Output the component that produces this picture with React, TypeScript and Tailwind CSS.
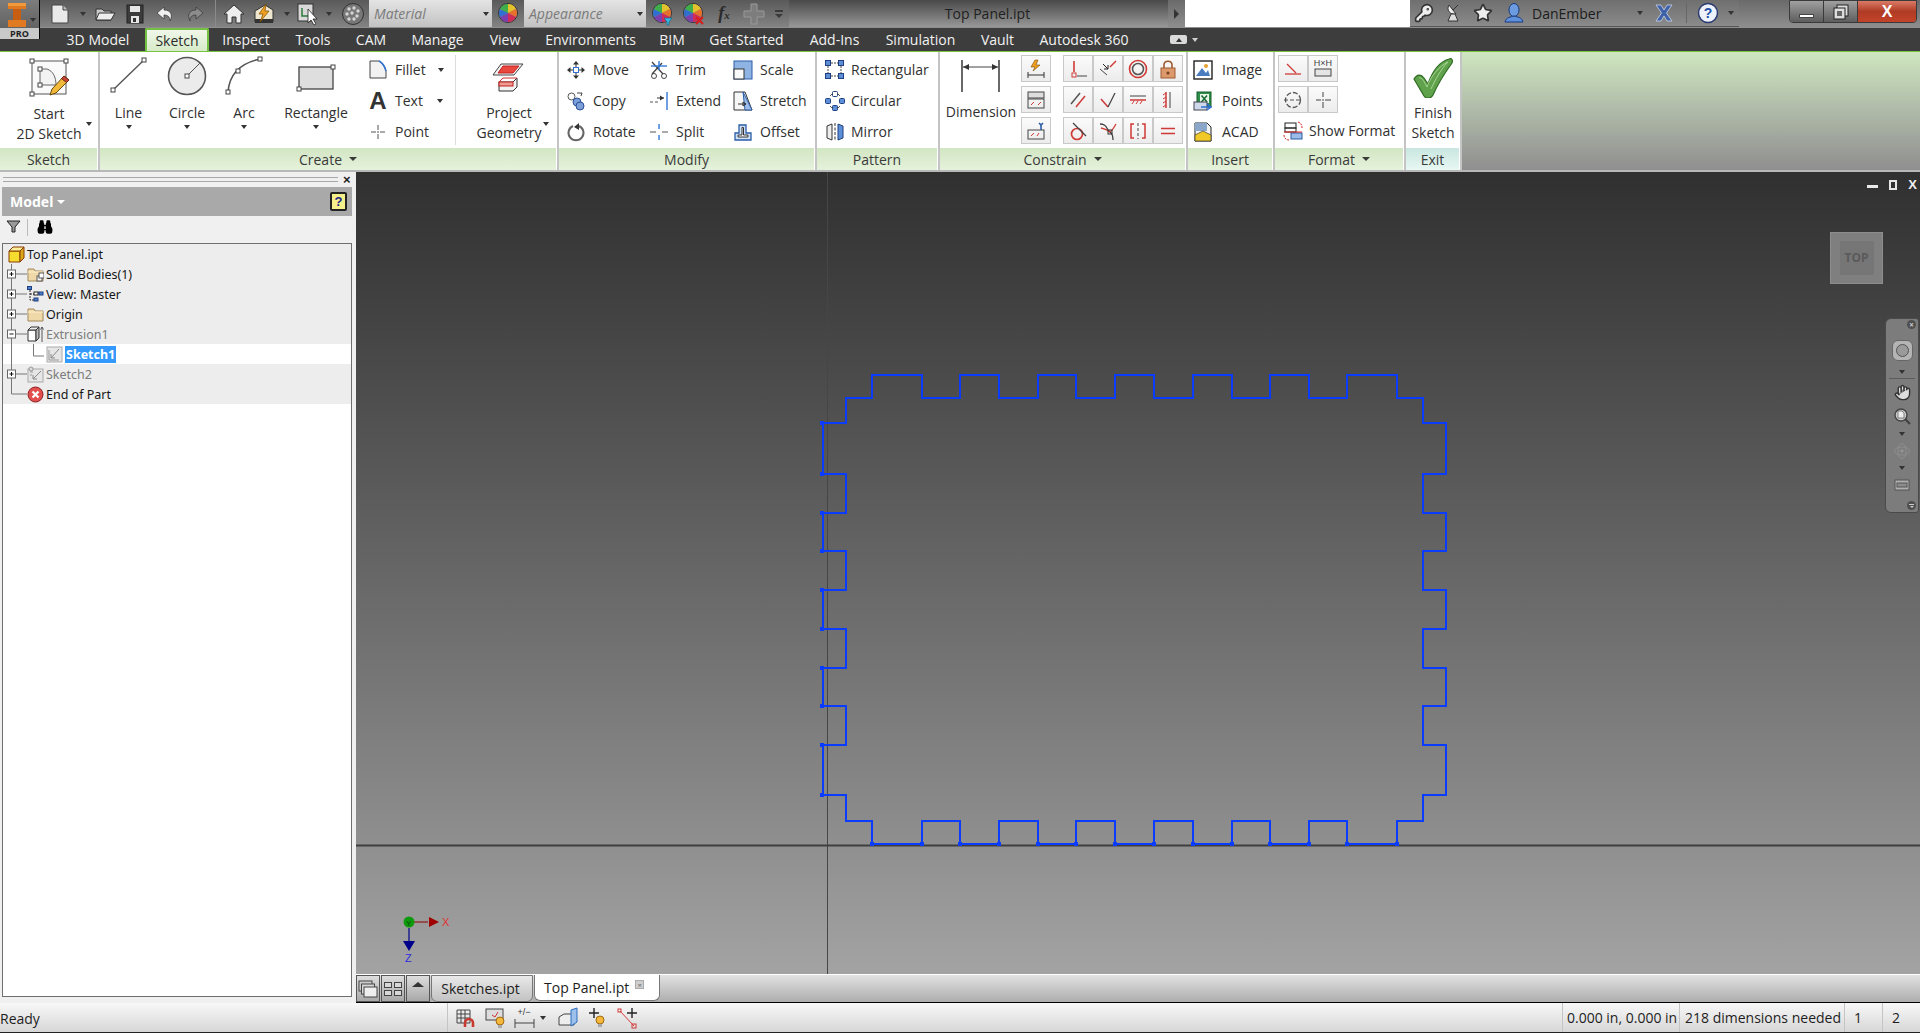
import React from "react";
import { Hand, Star, KeyRound, Binoculars } from "lucide-react";

type P = { w?: number; h?: number; children?: React.ReactNode; vb?: string };
const S = ({ w = 20, h = 20, vb, children }: P) => (
  <svg width={w} height={h} viewBox={vb ?? `0 0 ${w} ${h}`} fill="none" className="shrink-0 block">
    {children}
  </svg>
);
const Sq = ({ x, y, s = 4, c = "#444" }: { x: number; y: number; s?: number; c?: string }) => (
  <rect x={x - s / 2} y={y - s / 2} width={s} height={s} fill="#fff" stroke={c} />
);
const Dd = ({ c = "dark" }: { c?: "dark" | "light" | "mid" }) => (
  <span
    className={
      c === "dark"
        ? "block w-0 h-0 border-x-[3px] border-x-transparent border-t-[4px] border-t-[#333]"
        : c === "mid"
          ? "block w-0 h-0 border-x-[4px] border-x-transparent border-t-[4px] border-t-[#3a3a3a]"
          : "block w-0 h-0 border-x-[3px] border-x-transparent border-t-[4px] border-t-[#cfcfcf]"
    }
  />
);
const T = ({ w, children, cls = "" }: { w: number; children?: React.ReactNode; cls?: string }) => (
  <div style={{ width: w }} className={"flex items-center justify-center shrink-0 h-full " + cls}>
    {children}
  </div>
);

const Ball = ({ extra }: { extra?: React.ReactNode }) => (
  <S w={22} h={24}>
    <circle cx="11" cy="11" r="9.5" fill="#888" stroke="#333" />
    <path d="M11 11 L11 2 A9 9 0 0 1 19 7Z" fill="#e3c22c" />
    <path d="M11 11 L19 7 A9 9 0 0 1 19 15Z" fill="#e7702a" />
    <path d="M11 11 L19 15 A9 9 0 0 1 11 20Z" fill="#cf2c5a" />
    <path d="M11 11 L11 20 A9 9 0 0 1 3 15Z" fill="#7b3fb0" />
    <path d="M11 11 L3 15 A9 9 0 0 1 3 7Z" fill="#2f6fd0" />
    <path d="M11 11 L3 7 A9 9 0 0 1 11 2Z" fill="#3fae4a" />
    {extra}
  </S>
);

/* ---------- quick access icons ---------- */
const QNew = () => (
  <S w={20} h={22}>
    <path d="M2 2H13L18 7V20H2Z" fill="#e9e9e9" stroke="#444" />
    <path d="M13 2V7H18" fill="#bbb" stroke="#444" />
  </S>
);
const QOpen = () => (
  <S w={22} h={20}>
    <path d="M2 5H8L10 7H17V16H2Z" fill="#c9c9c9" stroke="#333" />
    <path d="M5 9H21L17 16H2Z" fill="#ededed" stroke="#333" />
  </S>
);
const QSave = () => (
  <S w={20} h={22}>
    <rect x="2" y="2" width="16" height="18" fill="#3c3c3c" stroke="#222" />
    <rect x="5" y="3" width="10" height="6" fill="#e6e6e6" />
    <rect x="6" y="13" width="8" height="7" fill="#e6e6e6" />
    <rect x="8" y="15" width="3" height="4" fill="#333" />
  </S>
);
const QArrow = ({ c, flip }: { c: string; flip?: boolean }) => (
  <S w={20} h={20}>
    <g transform={flip ? "translate(20 0) scale(-1 1)" : undefined}>
      <path d="M9 3 L2 9 L9 15 V11 C13 11 15 13 15 17 C18 11 16 6 9 6Z" fill={c} stroke="#333" strokeWidth=".7" />
    </g>
  </S>
);
const QHome = () => (
  <S w={22} h={22}>
    <path d="M11 2 L21 11 H18 V20 H13 V14 H9 V20 H4 V11 H1Z" fill="#eee" stroke="#333" />
  </S>
);
const QBolt = () => (
  <S w={24} h={24}>
    <path d="M3 9 L13 3 L21 8 V20 H3Z" fill="#efe6cf" stroke="#333" />
    <rect x="3" y="17" width="18" height="4" fill="#333" />
    <path d="M14 2 L7 12 H11 L8 20 L17 9 H13Z" fill="#f0a020" stroke="#7a4a00" strokeWidth=".7" />
  </S>
);
const QSelect = () => (
  <S w={24} h={24}>
    <rect x="2" y="2" width="15" height="17" fill="#d8d8d8" stroke="#333" />
    <path d="M6 6V14H12" stroke="#2b7a3a" strokeWidth="1.5" />
    <path d="M12 7 L12 21 L15 18 L18 23 L20 22 L17 17 L21 17Z" fill="#fff" stroke="#222" strokeWidth=".8" />
  </S>
);
const QSphere = () => (
  <S w={24} h={24}>
    <circle cx="12" cy="12" r="10.5" fill="#777" stroke="#333" />
    {[[8, 7], [13, 6], [17, 9], [6, 12], [11, 11], [16, 14], [8, 17], [13, 17]].map(([x, y]) => (
      <circle key={`${x}${y}`} cx={x} cy={y} r="1.7" fill="#d4d4d4" />
    ))}
  </S>
);
const QPlus = () => (
  <S w={22} h={22}>
    <path d="M8 1H14V8H21V14H14V21H8V14H1V8H8Z" fill="#7d7d7d" stroke="#9a9a9a" />
  </S>
);

/* ---------- big ribbon icons ---------- */
const BigStart = () => (
  <S w={44} h={44}>
    <rect x="5" y="7" width="34" height="33" fill="#fafafa" stroke="#555" />
    <path d="M13 15 H20 C26 17 29 23 29 31 H13Z" stroke="#666" fill="#f3f3f3" />
    <Sq x={5} y={7} /><Sq x={39} y={7} /><Sq x={5} y={40} /><Sq x={13} y={15} /><Sq x={13} y={31} />
    <path d="M37 22 L42 26 L29 39 L23 41 L25 35Z" fill="#f0b93a" stroke="#6b4a10" />
    <path d="M37 22 L42 26 L39.5 28.5 L34.5 24.5Z" fill="#c8443a" stroke="#6b2a10" />
  </S>
);
const BigLine = () => (
  <S w={44} h={44}>
    <path d="M7 35 L36 7" stroke="#555" strokeWidth="1.4" />
    <Sq x={6} y={36} /><Sq x={37} y={6} />
  </S>
);
const BigCircle = () => (
  <S w={44} h={44}>
    <circle cx="22" cy="22" r="18.5" fill="#ebebeb" stroke="#555" strokeWidth="1.6" />
    <path d="M22 22 L35 9" stroke="#555" />
    <Sq x={22} y={22} />
  </S>
);
const BigArc = () => (
  <S w={44} h={44}>
    <path d="M6 38 C7 24 14 10 38 5" stroke="#555" strokeWidth="1.6" />
    <Sq x={6} y={38} /><Sq x={16} y={17} /><Sq x={38} y={5} />
  </S>
);
const BigRect = () => (
  <S w={44} h={44}>
    <rect x="5" y="13" width="34" height="22" fill="#dedede" stroke="#444" strokeWidth="1.3" />
    <Sq x={39} y={13} /><Sq x={5} y={35} />
  </S>
);
const BigProject = () => (
  <S w={44} h={44}>
    <path d="M6 21 L14 10 H36 L27 21Z" fill="#f4f4f4" stroke="#444" />
    <path d="M11 19 L16 12 H32 L26 19Z" fill="#e9483f" stroke="#c02020" />
    <path d="M12 28 H26 L30 24 V33 L26 37 H12Z" fill="#f2f2f2" stroke="#333" />
    <path d="M12 28 L16 24 H30" stroke="#d23030" />
    <rect x="12" y="28" width="14" height="4" fill="#ef9a92" stroke="#c02020" />
  </S>
);
const BigDim = () => (
  <S w={44} h={44}>
    <path d="M3 6V38M40 6V38" stroke="#444" strokeWidth="1.6" />
    <path d="M4 13H39" stroke="#444" />
    <path d="M4 13 L10 10 V16Z M39 13 L33 10 V16Z" fill="#333" />
  </S>
);
const BigCheck = () => (
  <S w={44} h={44}>
    <path d="M3 25 C6 20 10 20 13 24 L17 30 C21 18 28 8 38 5 C41 4 42 6 41 9 C33 20 26 32 22 41 C20 45 15 45 13 42Z" fill="#5fa24b" stroke="#2f6b22" strokeWidth="1.2" />
    <path d="M8 24 C10 23 12 25 16 33 C20 22 28 12 37 8 C30 15 24 26 20 35" stroke="#a9d595" strokeWidth="1" />
  </S>
);

/* ---------- small ribbon icons ---------- */
const Fillet = () => (
  <S>
    <path d="M2 1H11C15 3 17 7 18 11V18H2Z" fill="#f2f2f2" stroke="#444" />
    <path d="M11 1C15 3 17 7 18 11" stroke="#2f6fd0" strokeWidth="1.6" />
  </S>
);
const PointI = () => (
  <S>
    <path d="M10 3V8M10 12V17M3 10H8M12 10H17" stroke="#555" />
    <circle cx="10" cy="10" r=".8" fill="#333" />
  </S>
);
const MoveI = () => (
  <S>
    <path d="M10 1 L7 4.5H13Z M10 19 L7 15.5H13Z M1 10 L4.5 7V13Z M19 10 L15.5 7V13Z" fill="#333" />
    <path d="M10 4V7M10 13V16M4 10H7M13 10H16" stroke="#333" />
    <rect x="7.5" y="7.5" width="5" height="5" stroke="#2f6fd0" />
  </S>
);
const CopyI = () => (
  <S>
    <circle cx="5.5" cy="5.5" r="3.5" stroke="#555" />
    <circle cx="11" cy="11" r="4" fill="#7d9fd8" stroke="#2a4e96" />
    <circle cx="14" cy="15" r="4" fill="#7d9fd8" stroke="#2a4e96" />
    <path d="M11 2H16L15 5" stroke="#444" />
  </S>
);
const RotateI = () => (
  <S>
    <path d="M7 4 A7.5 7.5 0 1 0 13 4" stroke="#666" strokeWidth="2" />
    <path d="M13 1 L8 5 L13 8Z" fill="#333" />
  </S>
);
const TrimI = () => (
  <S>
    <path d="M3 2 L14 14M3 14 L13 3" stroke="#444" strokeWidth="1.3" />
    <circle cx="15" cy="16" r="2.5" stroke="#444" />
    <circle cx="5" cy="16" r="2.5" stroke="#444" />
    <path d="M2 6H18" stroke="#2f78d8" strokeWidth="1.4" />
    <path d="M10 1V10" stroke="#2f78d8" strokeWidth="1.4" />
  </S>
);
const ExtendI = () => (
  <S>
    <path d="M1 11H4M6 11H9" stroke="#555" />
    <path d="M8 7H15" stroke="#333" />
    <path d="M15 7 L11 4.5V9.5Z" fill="#333" />
    <path d="M18 1V19" stroke="#2f78d8" strokeWidth="1.4" />
  </S>
);
const SplitI = () => (
  <S>
    <path d="M1 10H7M13 10H19" stroke="#555" strokeWidth="1.2" />
    <path d="M10 2V7M10 13V18" stroke="#2f78d8" strokeWidth="1.4" />
  </S>
);
const ScaleI = () => (
  <S>
    <rect x="1" y="1" width="18" height="18" fill="#8fb4e4" stroke="#2a5ca8" />
    <rect x="1" y="9" width="10" height="10" fill="#fafafa" stroke="#333" />
  </S>
);
const StretchI = () => (
  <S>
    <path d="M1 1H12L19 19H1Z" fill="#f6f6f6" stroke="#333" />
    <path d="M10 1L19 19H12Z" fill="#9dbde8" stroke="#2a5ca8" />
    <path d="M5 13H13M13 13L10 11V15Z" stroke="#333" />
  </S>
);
const OffsetI = () => (
  <S>
    <path d="M2 18V11H6V3H13V11H18V18Z" fill="#cfe0f6" stroke="#2a5ca8" strokeWidth="1.3" />
    <path d="M5 15V13H9V5.5H10.5V13H15V15Z" fill="#fff" stroke="#333" />
  </S>
);
const RectP = () => (
  <S>
    {[[3, 3], [16, 3], [3, 16], [16, 16]].map(([x, y]) => (
      <rect key={`${x}${y}`} x={x - 2.5} y={y - 2.5} width="5" height="5" fill="#5c8fd6" stroke="#1f3f80" />
    ))}
    <path d="M6 3H13M6 16H13M3 6V13M16 6V13" stroke="#444" strokeDasharray="2 1" />
  </S>
);
const CircP = () => (
  <S>
    {[[10, 3], [3, 10], [17, 10], [10, 17]].map(([x, y]) => (
      <rect key={`${x}${y}`} x={x - 2.5} y={y - 2.5} width="5" height="5" rx="1" fill={y === 3 ? "#fff" : "#5c8fd6"} stroke="#1f3f80" />
    ))}
    <path d="M5 5L8 2M15 5L12 2M5 15L8 18M15 15L12 18" stroke="#555" />
  </S>
);
const MirrorI = () => (
  <S>
    <path d="M2 4 L7 2 V18 L2 16Z" fill="#eee" stroke="#333" />
    <path d="M18 4 L13 2 V18 L18 16Z" fill="#5c8fd6" stroke="#1f3f80" />
    <path d="M10 1V19" stroke="#333" strokeDasharray="3 1.5" />
  </S>
);
const ImageI = () => (
  <S>
    <rect x="1" y="1" width="18" height="18" fill="#fff" stroke="#222" strokeWidth="1.4" />
    <path d="M3 16 L9 8 L13 13 L15 10 L17 16Z" fill="#4a7cc0" />
    <circle cx="13" cy="6" r="2" fill="#e8a030" />
  </S>
);
const PointsI = () => (
  <S>
    <rect x="4" y="1" width="14" height="15" fill="#2f8f4a" stroke="#165c2a" />
    <rect x="7" y="3" width="9" height="9" fill="#e8f5e8" />
    <path d="M8.5 4.5L14 11M14 4.5L8.5 11" stroke="#176a30" strokeWidth="1.5" />
    <rect x="1" y="11" width="13" height="8" fill="#cfd9ea" stroke="#445" />
    <path d="M8 16H18M14 13L18 16L14 19" stroke="#2f6fd0" strokeWidth="1.5" />
  </S>
);
const AcadI = () => (
  <S>
    <path d="M2 1H14L18 5V19H2Z" fill="#f2f2f2" stroke="#222" />
    <rect x="2" y="1" width="12" height="8" fill="#8aa7c9" />
    <path d="M2 19V13L10 9L18 13V19Z" fill="#f0c828" stroke="#222" strokeWidth=".6" />
  </S>
);
const ShowFmt = () => (
  <S>
    <rect x="2" y="2" width="11" height="5" stroke="#222" />
    <rect x="2" y="7" width="11" height="4" stroke="#222" />
    <rect x="8" y="12" width="11" height="6" fill="#9dbde8" stroke="#2a5ca8" />
    <path d="M1 11H19" stroke="#d82020" />
    <path d="M15 1 C18 2 19 4 19 7M1 14C1 17 3 19 6 19" stroke="#d82020" strokeDasharray="2 1" />
  </S>
);

const R = "#cf3a36";
const Con: React.ReactNode[] = [
  <S key="a"><path d="M6 2V13" stroke={R} strokeWidth="1.6" /><rect x="4" y="14" width="4" height="4" stroke={R} /><path d="M9 17H19" stroke="#444" /></S>,
  <S key="b"><path d="M12 8 L18 2" stroke={R} strokeWidth="1.4" /><path d="M2 10L9 16" stroke="#444" /><path d="M5 5L10 10M10 10V6M10 10H6" stroke="#222" /></S>,
  <S key="c"><circle cx="10" cy="10" r="8.5" stroke={R} strokeWidth="1.6" /><circle cx="10" cy="10" r="5.5" stroke="#555" strokeWidth="1.6" /></S>,
  <S key="d"><path d="M6 9V6C6 1 14 1 14 6V9" stroke="#a05a30" strokeWidth="1.6" /><rect x="3" y="9" width="14" height="10" fill="#dc9a6c" stroke="#a05a30" /><circle cx="10" cy="14" r="1.6" fill="#7a4020" /></S>,
  <S key="e"><path d="M3 14L12 3" stroke="#555" strokeWidth="1.5" /><path d="M8 17L17 6" stroke={R} strokeWidth="1.5" /></S>,
  <S key="f"><path d="M3 9L10 17" stroke={R} strokeWidth="1.5" /><path d="M10 17L17 3" stroke="#444" strokeWidth="1.3" /></S>,
  <S key="g"><path d="M2 6H18" stroke="#444" /><path d="M2 10H18" stroke={R} strokeWidth="1.5" /><path d="M4 14L6 11M8 14L10 11M12 14L14 11" stroke={R} /></S>,
  <S key="h"><path d="M12 2V18" stroke="#444" /><path d="M8 2V18" stroke={R} strokeWidth="1.5" /><path d="M5 5L8 3M5 9L8 7M5 13L8 11M5 17L8 15" stroke={R} /></S>,
  <S key="i"><circle cx="9" cy="13" r="5.5" stroke={R} strokeWidth="1.7" /><path d="M5 2L18 15" stroke="#444" strokeWidth="1.3" /></S>,
  <S key="j"><path d="M2 3C10 3 8 9 12 11C15 13 15 16 15 19" stroke="#444" strokeWidth="1.3" /><path d="M3 7C7 8 10 9 12 11C15 9 16 6 18 3" stroke={R} strokeWidth="1.3" /><rect x="10" y="9" width="4" height="4" stroke="#333" /></S>,
  <S key="k"><path d="M6 3H3V17H6M14 3H17V17H14" stroke={R} strokeWidth="1.5" /><path d="M10 2V18" stroke="#444" strokeDasharray="3 2" /></S>,
  <S key="l"><path d="M3 7.5H17M3 12.5H17" stroke={R} strokeWidth="1.6" /></S>,
];
const Fmt: React.ReactNode[] = [
  <S key="a"><path d="M2 15H18" stroke={R} strokeWidth="1.3" /><path d="M4 5L13 14" stroke={R} strokeWidth="1.3" /></S>,
  <S key="b" w={22} h={24}>
    <text x="11" y="9" textAnchor="middle" fontSize="9" fontFamily="Liberation Sans, sans-serif" fill="#444">H×H</text>
    <rect x="3" y="12" width="16" height="7" fill="#e4e4e4" stroke="#444" />
  </S>,
  <S key="c"><circle cx="10" cy="10" r="7.5" stroke="#555" strokeWidth="1.3" strokeDasharray="5 2" /><path d="M1 10H19" stroke="#555" strokeDasharray="4 2" /></S>,
  <S key="d"><path d="M10 2V7M10 12V18M3 10H8M12 10H18" stroke="#444" /><circle cx="10" cy="10" r=".8" fill="#333" /></S>,
];

/* ---------- tree icons ---------- */
const TCube = () => (
  <S w={17} h={17}>
    <path d="M1 5H12V16H1Z" fill="#f7dc30" stroke="#8a3a00" />
    <path d="M1 5L5 1H16L12 5Z" fill="#fbef9a" stroke="#8a3a00" />
    <path d="M12 5L16 1V12L12 16Z" fill="#d8a818" stroke="#8a3a00" />
  </S>
);
const TFolder = ({ doc }: { doc?: boolean }) => (
  <S w={17} h={17}>
    <path d="M1 3H7L8 5H16V15H1Z" fill="#f0d9a8" stroke="#a08858" />
    <path d="M1 6H16" stroke="#fff2d0" />
    {doc && (
      <>
        <rect x="10" y="10" width="5" height="5" fill="#fff" stroke="#555" />
        <rect x="12" y="7" width="5" height="5" fill="#fff" stroke="#555" />
      </>
    )}
  </S>
);
const TView = () => (
  <S w={17} h={17}>
    <rect x="0.5" y="0.5" width="4" height="3" fill="#4c80c8" stroke="#1f3f80" />
    <path d="M3 4V14H7M3 8H7" stroke="#222" strokeDasharray="2 1" />
    <path d="M7 7H15" stroke="#222" />
    <rect x="7" y="6" width="4" height="3" fill="#fff" stroke="#222" />
    <rect x="12" y="6" width="4" height="3" fill="#4c80c8" stroke="#1f3f80" />
    <rect x="7" y="12" width="4" height="3" fill="#4c80c8" stroke="#1f3f80" />
  </S>
);
const TExtr = () => (
  <S w={17} h={17}>
    <path d="M1 4H9V15H1Z" fill="#fff" stroke="#333" />
    <path d="M1 4L4 1H12L9 4Z" fill="#eee" stroke="#333" />
    <path d="M9 4L12 1V12L9 15Z" fill="#bbb" stroke="#333" />
    <path d="M15 16V1M13.5 3.5L15 1L16.5 3.5" stroke="#555" />
  </S>
);
const TSketch = () => (
  <S w={17} h={17}>
    <rect x="1" y="1" width="15" height="15" fill="#e6e6e6" stroke="#aaa" />
    <path d="M3 4V14H13" stroke="#999" />
    <path d="M13 3L5 12M5 8V12H9" stroke="#888" />
  </S>
);
const TSketch2 = () => (
  <S w={17} h={17}>
    <rect x="1" y="3" width="15" height="13" fill="#e6e6e6" stroke="#aaa" />
    <circle cx="4" cy="3" r="2" fill="#ddd" stroke="#999" />
    <path d="M3 6H6M3 9H5" stroke="#999" />
    <path d="M14 5L6 13M6 9V13H10" stroke="#888" />
  </S>
);
const TEnd = () => (
  <S w={17} h={17}>
    <circle cx="8.5" cy="8.5" r="7.5" fill="#e34f4f" stroke="#8f1f1f" />
    <path d="M5.5 5.5L11.5 11.5M11.5 5.5L5.5 11.5" stroke="#fff" strokeWidth="2.2" />
  </S>
);

const Big = ({ w, icon, lines, dd, pl = 0, top = 51 }: { w: number; icon: React.ReactNode; lines: string[]; dd?: "inline" | "side"; pl?: number; top?: number }) => (
  <div style={{ width: w, paddingLeft: pl }} className="relative shrink-0 flex flex-col items-center h-full">
    <div style={{ height: top }} className="pt-[2px] flex justify-center">{icon}</div>
    {lines.map((l) => (
      <div key={l} className="h-5 leading-5 whitespace-nowrap">{l}</div>
    ))}
    {dd === "inline" && <div className="mt-[2px]"><Dd /></div>}
    {dd === "side" && <div className="absolute right-[6px] top-[70px]"><Dd /></div>}
  </div>
);
const Small = ({ icon, label, gap = 7, dd, ddGap = 0 }: { icon: React.ReactNode; label: string; gap?: number; dd?: boolean; ddGap?: number }) => (
  <div className="h-[31px] flex items-center">
    <div className="w-5 flex justify-center">{icon}</div>
    <span style={{ marginLeft: gap }} className="whitespace-nowrap">{label}</span>
    {dd && <span style={{ marginLeft: ddGap }}><Dd /></span>}
  </div>
);
const Panel = ({ w, label, dd, children, exit }: { w: number; label: string; dd?: boolean; children: React.ReactNode; exit?: boolean }) => (
  <div style={{ width: w }} className="shrink-0 flex flex-col h-full bg-white border-r-2 border-[#c4c4c4]">
    <div className="h-[96px] flex">{children}</div>
    <div
      className={
        "h-[22px] mr-[1px] flex items-center justify-center gap-[7px] text-[#3a3a3a] " +
        (exit ? "bg-gradient-to-b from-[#c9e6e0] to-[#e8f7f3]" : "bg-gradient-to-b from-[#d2e6c3] to-[#e6f2dc]")
      }
    >
      {label}
      {dd && <Dd c="mid" />}
    </div>
  </div>
);
const Cell = ({ children, w = 30 }: { children: React.ReactNode; w?: number }) => (
  <div style={{ width: w }} className="h-[27px] flex items-center justify-center bg-gradient-to-b from-[#fbfbfb] to-[#ececec] border border-[#c9c9c9]">
    {children}
  </div>
);

const pts: [number, number][] = [
  [823,423],[846,423],[846,398],[872,398],[872,375],[922,375],[922,398],[960,398],[960,375],[999,375],[999,398],[1038,398],[1038,375],[1076,375],[1076,398],[1115,398],[1115,375],[1154,375],[1154,398],[1193,398],[1193,375],[1232,375],[1232,398],[1270,398],[1270,375],[1309,375],[1309,398],[1347,398],[1347,375],[1397,375],[1397,398],[1423,398],[1423,423],[1446,423],[1446,474],[1423,474],[1423,513],[1446,513],[1446,551],[1423,551],[1423,590],[1446,590],[1446,629],[1423,629],[1423,668],[1446,668],[1446,706],[1423,706],[1423,745],[1446,745],[1446,795],[1423,795],[1423,821],[1397,821],[1397,844],[1347,844],[1347,821],[1309,821],[1309,844],[1270,844],[1270,821],[1232,821],[1232,844],[1193,844],[1193,821],[1154,821],[1154,844],[1115,844],[1115,821],[1076,821],[1076,844],[1038,844],[1038,821],[999,821],[999,844],[960,844],[960,821],[922,821],[922,844],[872,844],[872,821],[846,821],[846,795],[823,795],[823,745],[846,745],[846,706],[823,706],[823,668],[846,668],[846,629],[823,629],[823,590],[846,590],[846,551],[823,551],[823,513],[846,513],[846,474],[823,474],
];
const d = "M" + pts.map((p) => p.join(" ")).join("L") + "Z";
const handles: [number, number][] = [
  ...[423,474,513,551,590,629,668,706,745,795].map((y) => [822, y] as [number, number]),
  ...[872,922,960,999,1038,1076,1115,1154,1193,1232,1270,1309,1347,1397].map((x) => [x, 844] as [number, number]),
];

const tabs: [string, number][] = [
  ["Inspect",74],["Tools",60],["CAM",56],["Manage",77],["View",58],["Environments",113],["BIM",50],["Get Started",99],["Add-Ins",77],["Simulation",95],["Vault",59],["Autodesk 360",114],
];

const TreeRow = ({ left, icon, label, dim }: { left: "plus" | "minus" | "end"; icon: React.ReactNode; label: string; dim?: boolean }) => (
  <div className="h-5 flex items-center">
    <svg width="24" height="20" viewBox="0 0 24 20" className="shrink-0">
      <path d={left === "end" ? "M8.5 0V10H24" : "M8.5 0V20"} stroke="#777" fill="none" />
      {left !== "end" && (
        <>
          <path d="M13 10H24" stroke="#777" />
          <rect x="4.5" y="6" width="8" height="8" fill="#fff" stroke="#666" />
          <path d="M6.5 10H10.5" stroke="#111" />
          {left === "plus" && <path d="M8.5 8V12" stroke="#111" />}
        </>
      )}
    </svg>
    <div className="w-[17px] shrink-0">{icon}</div>
    <span className={"ml-[2px] pt-[2px] " + (dim ? "text-[#7c7c7c]" : "text-[#171717]")}>{label}</span>
  </div>
);

export default function App() {
  return (
    <div className="w-[1920px] h-[1033px] flex flex-col overflow-hidden bg-[#3d3d3d] text-[14px] font-['Open_Sans','Noto_Sans',sans-serif]">
      {/* title bar */}
      <div className="relative h-[28px] flex shrink-0 bg-gradient-to-b from-[#6a6a6a] to-[#8f8f8f]">
        <div className="absolute left-0 top-0 z-10 w-10 h-[39px] bg-gradient-to-b from-[#7c7c7c] to-[#5a5a5a] border-r border-b border-black flex flex-col items-center">
          <div className="relative h-[28px] w-full">
            <svg width="40" height="28" viewBox="0 0 40 28" className="block">
              <path d="M8 3H26V9H21V20H26V27H8V20H13V9H8Z" fill="#e07a22" />
              <path d="M13 9H21V20H13Z" fill="#c85e12" />
              <path d="M8 3H26V6H8Z" fill="#f09a3c" />
            </svg>
            <div className="absolute right-[3px] top-[18px]"><Dd c="dark" /></div>
          </div>
          <div className="w-full h-[11px] bg-[#c9c9c9] text-[9px] leading-[11px] text-center font-bold text-[#222]">PRO</div>
        </div>
        <div className="flex w-[789px] h-[27px] shrink-0 bg-gradient-to-b from-[#5a5a5a] to-[#838383]">
          <T w={44} />
          <T w={32}><QNew /></T>
          <T w={14}><Dd c="dark" /></T>
          <T w={30}><QOpen /></T>
          <T w={30}><QSave /></T>
          <T w={30}><QArrow c="#efefef" /></T>
          <T w={30}><QArrow c="#8c8c8c" flip /></T>
          <T w={10}><span className="block w-px h-full bg-[#8a8a8a]" /></T>
          <T w={28}><QHome /></T>
          <T w={32}><QBolt /></T>
          <T w={14}><Dd /></T>
          <T w={28}><QSelect /></T>
          <T w={14}><Dd /></T>
          <T w={33}><QSphere /></T>
          <div className="w-[123px] shrink-0 h-full bg-gradient-to-b from-[#e4e4e4] to-[#c2c2c2] flex items-center justify-between pl-[5px] pr-[3px] italic text-[#7b7b7b]">
            Material<Dd c="dark" />
          </div>
          <T w={32}><Ball /></T>
          <div className="w-[122px] shrink-0 h-full bg-gradient-to-b from-[#e4e4e4] to-[#c2c2c2] flex items-center justify-between pl-[5px] pr-[3px] italic text-[#7b7b7b]">
            Appearance<Dd c="dark" />
          </div>
          <T w={32}><Ball extra={<path d="M13 16H21L18 20V23H16V20Z" fill="#35b7e8" stroke="#106080" strokeWidth=".6" />} /></T>
          <T w={30}><Ball extra={<path d="M14 15L21 22M21 15L14 22" stroke="#d91c1c" strokeWidth="2" />} /></T>
          <T w={32}><span className="font-['Liberation_Serif',serif] italic font-bold text-[18px] text-[#2b2b2b]">f<span className="text-[11px]">x</span></span></T>
          <T w={28}><QPlus /></T>
          <T w={21}><span className="flex flex-col gap-[2px] items-center"><span className="block w-2 h-[2px] bg-[#3a3a3a]" /><Dd c="mid" /></span></T>
        </div>
        <div className="w-[379px] shrink-0 h-[27px] pl-[18px] flex items-center justify-center text-[#1f1f1f] bg-gradient-to-b from-[#4a4a4a] to-[#989898]">Top Panel.ipt</div>
        <T w={17} cls="!h-[27px]"><span className="block w-0 h-0 border-y-[5px] border-y-transparent border-l-[5px] border-l-[#333]" /></T>
        <div className="w-[225px] shrink-0 h-[27px] bg-white" />
        <div className="flex h-[27px] w-[329px] shrink-0 bg-gradient-to-b from-[#6f6f6f] to-[#8b8b8b] border-b border-[#555]">
          <T w={28}><KeyRound size={20} className="text-[#333] fill-[#eee]" /></T>
          <T w={30}>
            <S w={20} h={22}>
              <path d="M6 3 C3 8 7 13 13 12Z" fill="#eee" stroke="#333" />
              <path d="M10 8L15 3" stroke="#333" />
              <path d="M8 12L5 19H15L12 12Z" fill="#ddd" stroke="#333" />
            </S>
          </T>
          <T w={30}><Star size={20} className="text-[#333] fill-[#eee]" /></T>
          <T w={32}>
            <S w={22} h={22}>
              <ellipse cx="11" cy="8" rx="5" ry="6.5" fill="#6d9be0" stroke="#173a80" />
              <path d="M2 20C3 15 8 15 11 14C14 15 19 15 20 20Z" fill="#5e90dc" stroke="#173a80" />
            </S>
          </T>
          <div className="w-[100px] shrink-0 pl-[2px] flex items-center text-[#1c1c1c]">DanEmber</div>
          <T w={20}><Dd c="dark" /></T>
          <T w={28}>
            <S w={20} h={20}>
              <path d="M2 2H7L10 7L13 2H18L12.5 10L18 18H13L10 13L7 18H2L7.5 10Z" fill="#3f62a8" stroke="#d8e2f6" strokeWidth=".7" />
            </S>
          </T>
          <T w={16}><span className="block w-px h-[20px] bg-[#666]" /></T>
          <T w={28}>
            <S w={22} h={22}>
              <circle cx="11" cy="11" r="9.5" fill="#eef2fb" stroke="#2a3c70" strokeWidth="1.5" />
              <text x="11" y="16" textAnchor="middle" fontSize="14" fontWeight="700" fill="#1f4fa8" fontFamily="Liberation Sans, sans-serif">?</text>
            </S>
          </T>
          <T w={17}><Dd c="dark" /></T>
        </div>
        <div className="w-[50px] shrink-0" />
        <div className="w-[128px] shrink-0 h-[23px] flex border border-[#3a3a3a] rounded-b-[4px] overflow-hidden">
          <div className="w-[34px] flex items-center justify-center bg-gradient-to-b from-[#a0a0a0] to-[#5e5e5e] border-r border-[#3a3a3a] pt-[8px]">
            <span className="block w-[15px] h-[4px] bg-white border border-[#444]" />
          </div>
          <div className="w-[34px] flex items-center justify-center bg-gradient-to-b from-[#a0a0a0] to-[#5e5e5e] border-r border-[#3a3a3a]">
            <S w={16} h={16}>
              <rect x="4" y="1" width="11" height="11" stroke="#222" fill="#ddd" />
              <rect x="1" y="4" width="11" height="11" stroke="#222" fill="#ddd" />
              <rect x="4" y="7" width="5" height="5" fill="#666" />
            </S>
          </div>
          <div className="flex-1 flex items-center justify-center bg-gradient-to-b from-[#d97a66] via-[#b03b24] to-[#c2442a] text-white font-bold text-[16px] leading-none font-['Liberation_Sans',sans-serif]">X</div>
        </div>
      </div>

      {/* tabs */}
      <div className="h-[23px] shrink-0 flex bg-[#3d3d3d] text-[#f2f2f2] pl-[53px]">
        <div className="w-[90px] flex items-center justify-center">3D Model</div>
        <div className="w-[2px]" />
        <div className="w-[64px] flex items-center justify-center text-[#2c2c2c] bg-gradient-to-b from-[#f0f7ea] to-[#d6ebc8] border-x-2 border-t-2 border-[#74c043] rounded-t-[2px]">Sketch</div>
        {tabs.map(([t, w]) => (
          <div key={t} style={{ width: w }} className="flex items-center justify-center whitespace-nowrap">{t}</div>
        ))}
        <div className="w-[29px]" />
        <div className="w-[17px] flex items-center justify-center">
          <div className="w-[17px] h-[9px] rounded-[2px] bg-[#d9d9d9] flex items-center justify-center">
            <span className="block w-0 h-0 border-x-[3px] border-x-transparent border-b-[4px] border-b-[#333]" />
          </div>
        </div>
        <div className="w-[15px] flex items-center justify-center"><Dd c="light" /></div>
      </div>
      <div className="h-px shrink-0 bg-[#78c341]" />

      {/* ribbon */}
      <div className="h-[120px] shrink-0 flex border-b-2 border-[#b8b8b8] text-[#303030] bg-white">
        <Panel w={100} label="Sketch">
          <Big w={98} top={52} icon={<BigStart />} lines={["Start", "2D Sketch"]} dd="side" />
        </Panel>
        <Panel w={459} label="Create" dd>
          <Big w={56} icon={<BigLine />} lines={["Line"]} dd="inline" pl={1} />
          <Big w={62} icon={<BigCircle />} lines={["Circle"]} dd="inline" />
          <Big w={52} icon={<BigArc />} lines={["Arc"]} dd="inline" />
          <Big w={92} icon={<BigRect />} lines={["Rectangle"]} dd="inline" />
          <div className="w-[93px] pl-[6px] pt-[2px] shrink-0">
            <Small icon={<Fillet />} label="Fillet" dd ddGap={12} />
            <div className="h-[31px] flex items-center">
              <div className="w-5 text-center font-bold text-[24px] leading-none font-['Liberation_Sans',sans-serif] text-[#333]">A</div>
              <span className="ml-[7px]">Text</span>
              <span className="ml-[14px]"><Dd /></span>
            </div>
            <Small icon={<PointI />} label="Point" />
          </div>
          <div className="w-px h-[90px] my-[3px] bg-[#dcdcdc] shrink-0" />
          <Big w={99} pl={7} icon={<BigProject />} lines={["Project", "Geometry"]} dd="side" />
        </Panel>
        <Panel w={258} label="Modify">
          <div className="w-[90px] pl-[7px] pt-[2px] shrink-0">
            <Small icon={<MoveI />} label="Move" />
            <Small icon={<CopyI />} label="Copy" />
            <Small icon={<RotateI />} label="Rotate" />
          </div>
          <div className="w-[84px] pt-[2px] shrink-0">
            <Small icon={<TrimI />} label="Trim" gap={7} />
            <Small icon={<ExtendI />} label="Extend" gap={7} />
            <Small icon={<SplitI />} label="Split" gap={7} />
          </div>
          <div className="pt-[2px]">
            <Small icon={<ScaleI />} label="Scale" />
            <Small icon={<StretchI />} label="Stretch" />
            <Small icon={<OffsetI />} label="Offset" />
          </div>
        </Panel>
        <Panel w={123} label="Pattern">
          <div className="pl-[8px] pt-[2px]">
            <Small icon={<RectP />} label="Rectangular" gap={6} />
            <Small icon={<CircP />} label="Circular" gap={6} />
            <Small icon={<MirrorI />} label="Mirror" gap={6} />
          </div>
        </Panel>
        <Panel w={248} label="Constrain" dd>
          <div className="w-[80px] ml-[1px] shrink-0 flex flex-col items-center">
            <div className="h-[49px] pt-[2px]"><BigDim /></div>
            <div>Dimension</div>
          </div>
          <div className="shrink-0 pt-[3px] flex flex-col gap-[4px]">
            <Cell>
              <S>
                <path d="M9 1L5 8H9L7 12L14 6H10L12 1Z" fill="#f0a020" stroke="#7a4a00" strokeWidth=".6" />
                <path d="M2 13V19M18 13V19M2 16H18" stroke="#333" />
              </S>
            </Cell>
            <Cell>
              <S>
                <rect x="2" y="2" width="16" height="6" fill="#ddd" stroke="#444" />
                <rect x="2" y="9" width="16" height="9" stroke="#444" />
                <path d="M5 15L8 12M12 15L15 12" stroke={R} />
              </S>
            </Cell>
            <Cell>
              <S>
                <rect x="2" y="9" width="16" height="9" stroke="#444" />
                <path d="M5 15L8 12M11 15L13 12" stroke={R} />
                <path d="M15 9V3M13 2L15 4L17 2" stroke="#2a5ca8" strokeWidth="1.6" />
              </S>
            </Cell>
          </div>
          <div className="ml-[12px] pt-[3px] grid grid-cols-[repeat(4,30px)] auto-rows-[27px] gap-y-[4px] shrink-0">
            {Con.map((c, i) => (<Cell key={i}>{c}</Cell>))}
          </div>
        </Panel>
        <Panel w={87} label="Insert">
          <div className="pl-[5px] pt-[2px]">
            <Small icon={<ImageI />} label="Image" gap={9} />
            <Small icon={<PointsI />} label="Points" gap={9} />
            <Small icon={<AcadI />} label="ACAD" gap={9} />
          </div>
        </Panel>
        <Panel w={131} label="Format" dd>
          <div className="pl-[3px] pt-[3px] flex flex-col">
            <div className="grid grid-cols-[repeat(2,30px)] auto-rows-[27px] gap-y-[4px]">
              {Fmt.map((c, i) => (<Cell key={i}>{c}</Cell>))}
            </div>
            <div className="mt-[2px] ml-[5px]">
              <Small icon={<ShowFmt />} label="Show Format" gap={6} />
            </div>
          </div>
        </Panel>
        <Panel w={56} label="Exit" exit>
          <Big w={54} icon={<BigCheck />} lines={["Finish", "Sketch"]} />
        </Panel>
        <div className="flex-1 bg-gradient-to-b from-[#cfe6c0] to-[#8f8f8f]" />
      </div>

      {/* main */}
      <div className="flex-1 min-h-0 flex bg-[#f0f0f0]">
        <div className="w-[356px] shrink-0 flex flex-col">
          <div className="h-[15px] flex items-center pl-[3px] shrink-0">
            <div className="w-[335px] h-[5px] border-y border-[#a8a8a8]" />
            <div className="ml-[5px] text-[13px] leading-none font-bold text-[#222] font-['Liberation_Sans',sans-serif]">×</div>
          </div>
          <div className="h-[29px] w-[350px] ml-[2px] shrink-0 bg-[#a9a9a9] flex items-center justify-between pl-2 pr-[5px]">
            <div className="flex items-center gap-[4px] text-white font-bold text-[14px] font-['Noto_Sans',sans-serif]">
              Model
              <span className="block w-0 h-0 border-x-[4px] border-x-transparent border-t-[4px] border-t-white" />
            </div>
            <div className="w-[17px] h-[19px] bg-[#f6f08a] border-2 border-[#222] rounded-[2px] flex items-center justify-center text-[13px] font-bold text-[#20208a] leading-none font-['Liberation_Sans',sans-serif]">?</div>
          </div>
          <div className="h-[27px] shrink-0 flex items-start pt-[3px] pl-[6px]">
            <S w={15} h={15}>
              <path d="M1 2H14L9 8V13H6V8Z" fill="#999" stroke="#222" />
            </S>
            <div className="w-px h-[17px] bg-[#bbb] ml-[6px]" />
            <Binoculars size={16} className="ml-[9px] text-black fill-black" />
          </div>
          <div className="w-[350px] ml-[2px] mb-[6px] flex-1 min-h-0 bg-white border border-[#6f6f6f] font-['Noto_Sans',sans-serif] text-[12.5px]">
            <div className="bg-[#ededed]">
              <div className="h-5 flex items-center pl-[5px]"><TCube /><span className="ml-[2px] pt-[2px] text-[#171717]">Top Panel.ipt</span></div>
              <TreeRow left="plus" icon={<TFolder doc />} label="Solid Bodies(1)" />
              <TreeRow left="plus" icon={<TView />} label="View: Master" />
              <TreeRow left="plus" icon={<TFolder />} label="Origin" />
              <TreeRow left="minus" icon={<TExtr />} label="Extrusion1" dim />
              <div className="h-5 flex items-center bg-white">
                <svg width="24" height="20" viewBox="0 0 24 20" className="shrink-0"><path d="M8.5 0V20" stroke="#777" /></svg>
                <svg width="19" height="20" viewBox="0 0 19 20" className="shrink-0"><path d="M6.5 0V12H17" stroke="#777" fill="none" /></svg>
                <div className="w-[17px] shrink-0"><TSketch /></div>
                <span className="ml-[2px] bg-[#3399ff] text-white font-bold leading-[17px] px-px">Sketch1</span>
              </div>
              <TreeRow left="plus" icon={<TSketch2 />} label="Sketch2" dim />
              <TreeRow left="end" icon={<TEnd />} label="End of Part" />
            </div>
          </div>
        </div>

        <div className="flex-1 min-w-0 flex flex-col">
          <div className="relative flex-1 min-h-0 bg-gradient-to-b from-[#303030] to-[#a3a3a3] overflow-hidden">
            <svg viewBox="356 172 1564 802" className="absolute inset-0 w-full h-full" fill="none">
              <path d="M827.5 172V974" stroke="#464646" />
              <path d="M356 845.5H1920" stroke="#3f3f3f" strokeWidth="2" />
              <path d={d} stroke="#0a3cff" strokeWidth="2" />
              {handles.map(([x, y]) => (
                <rect key={`${x}-${y}`} x={x - 2} y={y - 2} width="4" height="4" fill="#0a3cff" />
              ))}
              <path d="M409 922H428" stroke="#8b0000" />
              <path d="M429 917L439 922L429 927Z" fill="#a00000" />
              <path d="M409 928V942" stroke="#00008b" strokeWidth="1.2" />
              <path d="M403 941H415L409 951Z" fill="#00008b" />
              <circle cx="409" cy="922" r="5.5" fill="#0d9a0d" />
              <text x="442" y="926" fontSize="11" fill="#e23030" fontFamily="Liberation Sans, sans-serif">X</text>
              <text x="405" y="962" fontSize="11" fill="#2a2ae0" fontFamily="Liberation Sans, sans-serif">Z</text>
              <text x="406" y="926" fontSize="8" fill="#064a06" fontFamily="Liberation Sans, sans-serif">Y</text>
            </svg>
            {/* window buttons */}
            <div className="absolute right-[3px] top-[6px] flex items-center gap-[11px] text-white">
              <span className="block w-[11px] h-[3px] bg-[#e8e8e8] mt-[4px]" />
              <span className="block w-[8px] h-[10px] border-2 border-[#e8e8e8]" />
              <span className="text-[13px] leading-none font-bold font-['Liberation_Sans',sans-serif] text-[#f0f0f0]">X</span>
            </div>
            {/* view cube */}
            <div className="absolute left-[1474px] top-[60px] w-[53px] h-[52px] bg-[#7f7f7f] border border-[#8d8d8d] flex items-center justify-center">
              <div className="w-[34px] h-[34px] bg-[#767676] flex items-center justify-center text-[12px] font-bold text-[#5a5a5a]">TOP</div>
            </div>
            {/* nav bar */}
            <div className="absolute left-[1529px] top-[146px] w-[34px] h-[195px] bg-[#7c7c7c] border border-[#4a4a4a] rounded-l-[6px] rounded-r-[3px] flex flex-col items-center">
              <div className="h-[11px] w-full flex justify-end pr-[2px] pt-[1px]">
                <span className="w-[9px] h-[9px] rounded-full bg-[#4f4f4f] text-[#ccc] text-[8px] leading-[9px] text-center font-bold">×</span>
              </div>
              <div className="mt-[10px] w-[21px] h-[21px] rounded-[6px] bg-[#b4b4b4] border border-[#666] flex items-center justify-center">
                <span className="block w-[13px] h-[13px] rounded-full bg-[#9a9a9a] border border-[#555]" />
              </div>
              <div className="mt-[9px]"><Dd c="dark" /></div>
              <div className="mt-[4px] w-[26px] h-px bg-[#5c5c5c]" />
              <Hand size={17} className="mt-[5px] text-[#333] fill-[#ddd]" />
              <div className="mt-[6px]">
                <S w={18} h={18}>
                  <circle cx="8" cy="8" r="6" fill="#ccc" stroke="#444" strokeWidth="1.4" />
                  <path d="M5 4H9L11 6V11H5Z" fill="#eee" stroke="#555" strokeWidth=".7" />
                  <path d="M12 12L17 17" stroke="#444" strokeWidth="2.4" />
                </S>
              </div>
              <div className="mt-[7px]"><Dd c="dark" /></div>
              <div className="mt-[6px]">
                <S w={18} h={18}>
                  <ellipse cx="9" cy="9" rx="7.5" ry="4" stroke="#8f8f8f" />
                  <ellipse cx="9" cy="9" rx="4" ry="7.5" stroke="#8f8f8f" />
                  <path d="M7 9H11M9 7V11" stroke="#9a9a9a" />
                </S>
              </div>
              <div className="mt-[6px]"><Dd c="dark" /></div>
              <div className="mt-[7px]">
                <S w={16} h={14}>
                  <path d="M4 3L6 0.5L10 2L13 1" stroke="#777" />
                  <rect x="1" y="3" width="14" height="10" fill="#b0b0b0" stroke="#555" />
                  <rect x="3" y="6" width="10" height="4" fill="#8c8c8c" stroke="#555" />
                </S>
              </div>
              <div className="mt-auto mb-[2px] w-full flex justify-end pr-[2px]">
                <span className="w-[9px] h-[9px] rounded-full bg-[#4f4f4f] flex flex-col items-center justify-center gap-px">
                  <span className="block w-[5px] h-px bg-[#ccc]" />
                  <span className="block w-0 h-0 border-x-[2px] border-x-transparent border-t-[2px] border-t-[#ccc]" />
                </span>
              </div>
            </div>
          </div>
          {/* document tabs */}
          <div className="h-[29px] shrink-0 flex border-t border-white bg-gradient-to-b from-[#e2e2e2] to-[#adadad] border-b border-b-black">
            {[0, 1, 2].map((i) => (
              <div key={i} className="w-[24px] mr-px h-full bg-gradient-to-b from-[#dedede] to-[#a8a8a8] border border-[#555] flex items-center justify-center">
                {i === 0 && (
                  <S w={20} h={20}>
                    <rect x="1" y="2" width="13" height="10" fill="#ccc" stroke="#444" />
                    <rect x="3.5" y="5" width="13" height="10" fill="#d8d8d8" stroke="#444" />
                    <rect x="6" y="8" width="13" height="10" fill="#eee" stroke="#444" />
                  </S>
                )}
                {i === 1 && (
                  <div className="grid grid-cols-2 gap-[2px]">
                    {[0, 1, 2, 3].map((k) => (
                      <span key={k} className="block w-[8px] h-[6px] bg-[#d8d8d8] border border-[#444]" />
                    ))}
                  </div>
                )}
                {i === 2 && <span className="block -mt-2 w-0 h-0 border-x-[6px] border-x-transparent border-b-[5px] border-b-[#333]" />}
              </div>
            ))}
            <div className="w-[102px] h-full pr-[3px] flex items-center justify-center bg-gradient-to-b from-[#e9e9e9] to-[#c3c3c3] border border-[#777] rounded-b-[6px] text-[#1c1c1c]">Sketches.ipt</div>
            <div className="w-[126px] ml-px h-[26px] flex items-center pl-[9px] bg-white border-x border-b border-[#777] rounded-b-[6px] text-[#1c1c1c]">
              Top Panel.ipt
              <span className="ml-[6px] -mt-[7px] w-[9px] h-[9px] bg-[#cfcfcf] border border-[#aaa] text-[8px] leading-[7px] text-center text-[#666]">×</span>
            </div>
          </div>
        </div>
      </div>

      {/* status */}
      <div className="h-[30px] shrink-0 flex items-center bg-gradient-to-b from-[#f8f8f8] to-[#d7d7d7] border-b border-[#222] text-[#1e1e1e]">
        <div className="w-[448px] shrink-0 h-full flex items-center pt-px border-r border-[#c4c4c4]">Ready</div>
        <div className="flex-1 flex items-center pl-[4px]">
          <T w={28} cls="!h-[26px]">
            <S w={22} h={22}>
              <path d="M2 3H15V16H2ZM2 7H15M2 11H15M6 3V16M10 3V16" stroke="#444" />
              <path d="M10 20V16A4 4 0 0 1 18 16V20" stroke="#c83a30" strokeWidth="2.6" />
            </S>
          </T>
          <div className="w-[2px]" />
          <T w={28} cls="!h-[26px]">
            <S w={22} h={22}>
              <rect x="1" y="2" width="17" height="11" fill="#ddd" stroke="#444" />
              <path d="M7 8L10 10L13 5" stroke="#d23030" />
              <circle cx="15" cy="14" r="4" fill="#f5b83d" stroke="#a06a10" />
              <rect x="13" y="18" width="4" height="3" fill="#aaa" />
            </S>
          </T>
          <T w={30} cls="!h-[26px]">
            <S w={24} h={22}>
              <text x="11" y="8" textAnchor="middle" fontSize="9" fill="#333" fontFamily="Liberation Sans, sans-serif">+/−</text>
              <path d="M2 12V21M21 12V21M2 16H21" stroke="#444" />
            </S>
          </T>
          <Dd />
          <div className="w-[10px]" />
          <T w={24} cls="!h-[26px]">
            <S w={22} h={22}>
              <path d="M2 10L7 7H17V18H2Z" fill="#eee" stroke="#444" />
              <path d="M14 3L20 1V15L14 19Z" fill="#9dc0ea" stroke="#2a6fc0" />
            </S>
          </T>
          <div className="w-[6px]" />
          <T w={24} cls="!h-[26px]">
            <S w={22} h={22}>
              <path d="M7 1V11M2 6H12" stroke="#222" strokeWidth="1.4" />
              <circle cx="13" cy="13" r="4" fill="#f5b83d" stroke="#a06a10" />
              <rect x="11" y="17" width="4" height="3" fill="#aaa" />
            </S>
          </T>
          <div className="w-[6px]" />
          <T w={24} cls="!h-[26px]">
            <S w={22} h={22}>
              <path d="M3 4L17 19" stroke="#d23a3a" />
              <rect x="1" y="2" width="3" height="3" stroke="#d23a3a" />
              <rect x="15" y="17" width="4" height="4" stroke="#d23a3a" />
              <path d="M15 1V11M10 6H20" stroke="#222" strokeWidth="1.4" />
            </S>
          </T>
        </div>
        <div className="w-[117px] shrink-0 h-full flex items-center pl-[4px] border-l border-[#c4c4c4] whitespace-nowrap">0.000 in, 0.000 in</div>
        <div className="w-[165px] shrink-0 h-full flex items-center pl-[5px] border-l border-[#c4c4c4] whitespace-nowrap">218 dimensions needed</div>
        <div className="w-[38px] shrink-0 h-full flex items-center pl-[9px] border-l border-[#c4c4c4]">1</div>
        <div className="w-[38px] shrink-0 h-full flex items-center pl-[9px] border-l border-[#c4c4c4]">2</div>
      </div>
    </div>
  );
}
